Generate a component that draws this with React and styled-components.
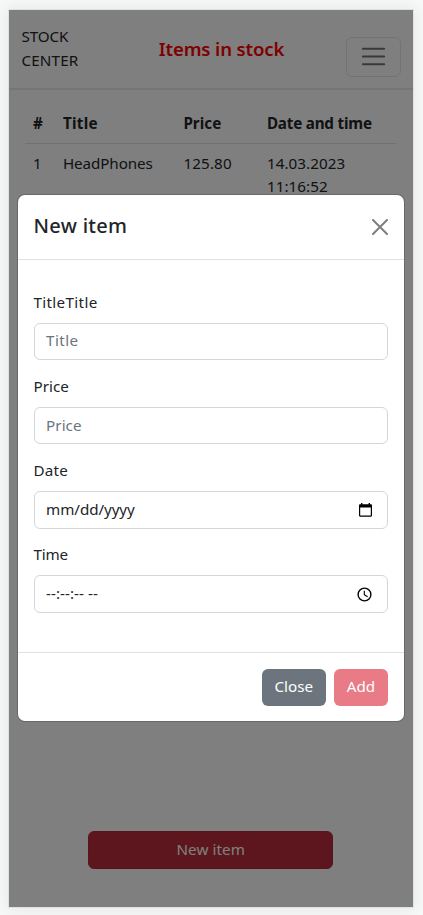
import React from 'react';
import styled, { createGlobalStyle } from 'styled-components';

const GlobalStyle = createGlobalStyle`
  *, *::before, *::after { box-sizing: border-box; }
  body {
    margin: 0;
    background: #f8faf9;
    color: #212529;
    font-family: "Noto Sans", "Open Sans", sans-serif;
    font-size: 15.2px;
    line-height: 23.5px;
  }
`;

const Page = styled.div`
  height: 915px;
  padding: 10px 10.5px 8.5px 9px;
  overflow: hidden;
`;

const Frame = styled.div`
  position: relative;
  display: flex;
  flex-direction: column;
  width: 403.5px;
  height: 896.5px;
  background: #fff;
  box-shadow: 0 0 0 1px #dfe2e0, 0 0 14px 4px rgba(90, 100, 95, 0.1);
`;

const Navbar = styled.header`
  display: flex;
  align-items: flex-start;
  height: 79.5px;
  padding: 14px 12px 0;
  border-bottom: 2px solid #ebebeb;
`;

const Brand = styled.div`
  display: flex;
  flex-direction: column;
  width: 138px;
  padding-left: 0.4px;
  line-height: 24px;
`;

const Word = styled.span`
  letter-spacing: ${({ $spacing }) => $spacing || 0}px;
`;

const PageTitle = styled.h1`
  margin: 12px 0 0;
  width: 187px;
  color: #f00;
  font-size: 18.6px;
  font-weight: 600;
  line-height: 26px;
  letter-spacing: -0.15px;
  white-space: nowrap;
`;

const Toggler = styled.button`
  display: flex;
  align-items: center;
  justify-content: center;
  width: 55px;
  height: 39.5px;
  margin: 13.2px 0 0;
  padding: 0;
  border: 1px solid #e6e6e6;
  border-radius: 6px;
  background: transparent;
`;

const Table = styled.div`
  margin: 14px 16.5px 0 15.5px;
`;

const Row = styled.div`
  display: grid;
  grid-template-columns: 30px 120.5px 83.5px 1fr;
  padding: 8px 0 8px 8.4px;
  border-bottom: 1px solid #dee2e6;
  font-weight: ${({ $head }) => ($head ? 700 : 400)};
`;

const Cell = styled.div`
  line-height: 23.2px;
  letter-spacing: ${({ $spacing }) => $spacing || 0}px;
`;

const CreateButton = styled.button`
  align-self: center;
  width: 245px;
  height: 37.5px;
  margin: auto 0 38px;
  padding: 0;
  border: 1px solid #b02a37;
  border-radius: 6px;
  background: #bb2d3b;
  color: #fff;
  font: inherit;
  letter-spacing: 0.1px;
`;

const Backdrop = styled.div`
  position: absolute;
  inset: 0;
  padding: 185px 8.5px 0 9px;
  background: rgba(0, 0, 0, 0.5);
`;

const Dialog = styled.section`
  display: flex;
  flex-direction: column;
  height: 526px;
  border-radius: 7px;
  background: #fff;
  box-shadow: 0 0 0 1px rgba(0, 0, 0, 0.17);
`;

const DialogHeader = styled.header`
  display: flex;
  align-items: center;
  justify-content: space-between;
  height: 65px;
  padding: 0 16px 2px 15.5px;
  border-bottom: 1px solid #dee2e6;
`;

const DialogTitle = styled.h2`
  margin: 0;
  font-size: 20px;
  font-weight: 500;
  line-height: 30px;
  letter-spacing: 0.3px;
`;

const CloseIconButton = styled.button`
  display: flex;
  padding: 1px 0 0;
  border: 0;
  background: transparent;
  opacity: 0.5;
`;

const DialogBody = styled.form`
  flex: 1;
  padding: 30.5px 16px 0 15.5px;
`;

const Field = styled.div`
  display: flex;
  flex-direction: column;
  height: 84.3px;
`;

const Label = styled.label`
  margin-bottom: 8.5px;
  letter-spacing: ${({ $spacing }) => $spacing}px;
`;

const Input = styled.input`
  width: 100%;
  height: 37.5px;
  padding: 0 11.6px 2px;
  border: 1px solid #d1d7dd;
  border-radius: 6px;
  background: #fff;
  font: inherit;
  letter-spacing: ${({ $spacing }) => $spacing}px;
  &::placeholder { color: #6c757d; opacity: 1; }
`;

const PickerBox = styled.div`
  display: flex;
  align-items: center;
  justify-content: space-between;
  height: 37.5px;
  padding: 0 ${({ $end }) => $end}px 0 11.6px;
  border: 1px solid #d1d7dd;
  border-radius: 6px;
  letter-spacing: ${({ $spacing }) => $spacing}px;
`;

const DialogFooter = styled.footer`
  display: flex;
  justify-content: flex-end;
  gap: 8px;
  height: 69px;
  padding: 15.5px 16px 0;
  border-top: 1px solid #dee2e6;
`;

const Button = styled.button`
  width: ${({ $width }) => $width}px;
  height: 37.5px;
  padding: 0 0 1px;
  border: 0;
  border-radius: 6px;
  background: ${({ $danger }) => ($danger ? '#dc3545' : '#6c757d')};
  color: #fff;
  font: inherit;
  letter-spacing: 0;
  opacity: ${({ $danger }) => ($danger ? 0.65 : 1)};
`;

const MenuIcon = () => (
  <svg width="29" height="29" viewBox="0 0 30 30" fill="none">
    <path stroke="rgba(0,0,0,.55)" strokeLinecap="round" strokeWidth="2" d="M4 7h22M4 15h22M4 23h22" />
  </svg>
);

const CrossIcon = () => (
  <svg width="16" height="16" viewBox="0 0 16 16">
    <path d="M1 1 15 15M15 1 1 15" stroke="#000" strokeWidth="2" strokeLinecap="round" />
  </svg>
);

const CalendarIcon = () => (
  <svg width="13" height="14" viewBox="0 0 13 14">
    <path d="M2 0h1.4v1.2h6.2V0H11v1.2h.8c.7 0 1.2.5 1.2 1.2v10.1c0 .7-.5 1.2-1.2 1.2H1.2C.5 13.7 0 13.2 0 12.5V2.4c0-.7.5-1.2 1.2-1.2H2zM1.2 4.5v8h10.6v-8z" fill="#000" fillRule="evenodd" />
  </svg>
);

const ClockIcon = () => (
  <svg width="15" height="15" viewBox="0 0 15 15" fill="none" stroke="#000">
    <circle cx="7.5" cy="7.5" r="6.4" strokeWidth="1.4" />
    <path d="M7.3 3.8v4l3.3 2" strokeWidth="1.1" />
  </svg>
);

export default function App() {
  return (
    <Page>
      <GlobalStyle />
      <Frame>
        <Navbar>
          <Brand>
            <Word $spacing={-0.1}>STOCK</Word>
            <Word $spacing={0.2}>CENTER</Word>
          </Brand>
          <PageTitle>Items in stock</PageTitle>
          <Toggler aria-label="Menu"><MenuIcon /></Toggler>
        </Navbar>
        <Table>
          <Row $head>
            <Cell>#</Cell>
            <Cell $spacing={0.3}>Title</Cell>
            <Cell $spacing={0.05}>Price</Cell>
            <Cell $spacing={-0.19}>Date and time</Cell>
          </Row>
          <Row>
            <Cell>1</Cell>
            <Cell $spacing={-0.08}>HeadPhones</Cell>
            <Cell $spacing={0.15}>125.80</Cell>
            <Cell $spacing={0.06}>14.03.2023<br />11:16:52</Cell>
          </Row>
        </Table>
        <CreateButton>New item</CreateButton>
        <Backdrop>
          <Dialog role="dialog">
            <DialogHeader>
              <DialogTitle>New item</DialogTitle>
              <CloseIconButton aria-label="Close"><CrossIcon /></CloseIconButton>
            </DialogHeader>
            <DialogBody>
              <Field>
                <Label $spacing={0.34}>TitleTitle</Label>
                <Input placeholder="Title" $spacing={0.4} />
              </Field>
              <Field>
                <Label $spacing={0.05}>Price</Label>
                <Input placeholder="Price" $spacing={0.05} />
              </Field>
              <Field>
                <Label $spacing={0.2}>Date</Label>
                <PickerBox $end={15} $spacing={-0.08}>mm/dd/yyyy<CalendarIcon /></PickerBox>
              </Field>
              <Field>
                <Label $spacing={-0.15}>Time</Label>
                <PickerBox $end={15.5} $spacing={0.05}>--:--:-- --<ClockIcon /></PickerBox>
              </Field>
            </DialogBody>
            <DialogFooter>
              <Button type="button" $width={64.5}>Close</Button>
              <Button type="button" $width={54} $danger>Add</Button>
            </DialogFooter>
          </Dialog>
        </Backdrop>
      </Frame>
    </Page>
  );
}
